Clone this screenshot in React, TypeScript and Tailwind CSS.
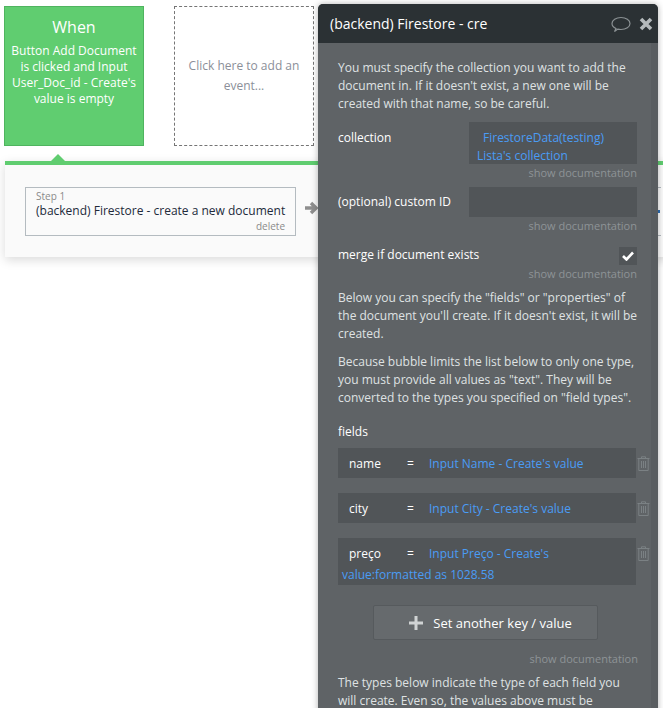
import React from "react";

const font = { fontFamily: '"Open Sans", sans-serif' };

function Doc({ className = "" }: { className?: string }) {
  return <div className={"text-right text-[11px] leading-[16px] text-[#8e9396] " + className}>show documentation</div>;
}

function Trash() {
  return (
    <svg width="13" height="15" viewBox="0 0 13 15" fill="none" stroke="#7b8184" strokeWidth="1" className="block">
      <path d="M0.5 2.5H12.5M4.5 2.5V0.8H8.5V2.5M1.8 2.5V14.5H11.2V2.5" />
      <path d="M4.5 5V12M6.5 5V12M8.5 5V12" />
    </svg>
  );
}

function Field({ name, first, second, h }: { name: string; first: string; second?: string; h: string }) {
  return (
    <div className="flex">
      <div className={"w-[298px] shrink-0 bg-[#515558] text-[12px] " + h}>
        <div className="flex h-[30px] items-center pt-[1px]">
          <span className="ml-[11px] w-[58px] text-white">{name}</span>
          <span className="w-[22px] text-white">=</span>
          <span className="text-[#4a9cf5]">{first}</span>
        </div>
        {second && <div className="ml-[4px] -mt-[3px] leading-[20px] text-[#4a9cf5]">{second}</div>}
      </div>
      <div className="ml-[1px] flex h-[30px] w-[13px] shrink-0 items-center justify-center"><Trash /></div>
    </div>
  );
}

export default function App() {
  return (
    <div className="relative h-[708px] w-[663px] overflow-hidden bg-white" style={font}>
      <div className="px-[4px] pt-[6px]">
        <div className="flex gap-[30px]">
          <div className="h-[140px] w-[140px] border border-[#4fb45f] bg-[#60cd70] pt-[8px] text-center text-white">
            <div className="text-[16px] leading-[24px]">When</div>
            <div className="mt-[4px] text-[12px] leading-[16px]">
              Button Add Document<br />is clicked and Input<br />User_Doc_id - Create's<br />value is empty
            </div>
          </div>
          <div className="flex h-[140px] w-[140px] justify-center border border-dashed border-[#757575] pt-[49px] text-center text-[12px] leading-[20px] text-[#8b8f99]">
            <div>Click here to add an<br />event...</div>
          </div>
        </div>
        <div className="relative ml-[1px] mt-[15px] h-[96px] w-[700px] border-t-[4px] border-[#60cd70] bg-[#fafafa] shadow-[0_3px_10px_rgba(0,0,0,0.15)]">
          <div className="absolute -top-[11px] left-[46px] h-0 w-0 border-x-[7px] border-b-[7px] border-x-transparent border-b-[#60cd70]" />
          <div className="ml-[20px] mt-[22px] flex items-center">
            <div className="h-[49px] w-[271px] shrink-0 border border-[#b4bbc0] pl-[10px] pr-[10px] pt-[1px]">
              <div className="text-[10px] leading-[15px] text-[#8a8a8a]">Step 1</div>
              <div className="whitespace-nowrap text-[12px] leading-[13px] text-[#222a3a]">(backend) Firestore - create a new document</div>
              <div className="mt-[2px] text-right text-[10px] leading-[15px] text-[#8a8a8a]">delete</div>
            </div>
            <svg width="14" height="14" viewBox="0 0 14 14" className="mb-[7px] ml-[8px] shrink-0" fill="none" stroke="#8e8e8e" strokeWidth="3.4">
              <path d="M1 7H12M7 2L12 7L7 12" />
            </svg>
            <div className="ml-[8px] flex h-[49px] w-[335px] shrink-0 items-center justify-end border-y border-[#b4bbc0] pr-[1px]">
              <div className="h-[3px] w-[2px] bg-[#2f6fb5]" />
            </div>
          </div>
        </div>
      </div>

      <div className="absolute left-[318px] top-[4px] h-[720px] w-[340px] overflow-hidden rounded-t-[5px] bg-[#5f6366] shadow-[0_0_6px_rgba(0,0,0,0.3)]">
        <div className="flex h-[39px] items-center bg-[#2b3134] pl-[12px] pr-[5px]">
          <div className="flex-1 text-[14px] text-white">(backend) Firestore - cre</div>
          <svg width="20" height="18" viewBox="0 0 20 18" fill="none" stroke="#8a9093" strokeWidth="1.2">
            <path d="M5 13.5C2.5 12.5 1 11 1 8.5C1 5 5 2.5 10 2.5S19 5 19 8.5S15 14.5 10 14.5C8.8 14.5 7.8 14.4 6.8 14.1L3.5 16.5Z" />
          </svg>
          <svg width="14" height="14" viewBox="0 0 14 14" className="ml-[8px]" fill="none" stroke="#b4b9bb" strokeWidth="3.6">
            <path d="M2 2L12 12M12 2L2 12" />
          </svg>
        </div>
        <div className="flex h-[681px]">
          <div className="w-[333px] pl-[20px] pr-[14px] pt-[16px] text-[12px] leading-[18px] text-[#dfe2e3]">
            <p>You must specify the collection you want to add the document in. If it doesn't exist, a new one will be created with that name, so be careful.</p>

            <div className="mt-[9px] flex">
              <div className="w-[131px] pt-[7px] text-white">collection</div>
              <div className="h-[42px] w-[168px] bg-[#515558] pt-[7px] text-[#4a9cf5]">
                <div className="pl-[14px]">FirestoreData(testing)</div>
                <div className="pl-[8px]">Lista's collection</div>
              </div>
            </div>
            <Doc className="mt-[1px]" />

            <div className="mt-[6px] flex">
              <div className="flex w-[131px] items-center whitespace-nowrap text-white">(optional) custom ID</div>
              <div className="h-[30px] w-[168px] bg-[#515558]" />
            </div>
            <Doc className="mt-[1px]" />

            <div className="mt-[13px] flex items-center justify-between">
              <div className="-mt-[3px] text-white">merge if document exists</div>
              <div className="flex h-[18px] w-[18px] items-center justify-center bg-[#515558]">
                <svg width="12" height="10" viewBox="0 0 12 10" fill="none" stroke="white" strokeWidth="2.6"><path d="M1 5L4.5 8.5L11 1.5" /></svg>
              </div>
            </div>
            <Doc className="mt-[1px]" />

            <p className="mt-[7px] whitespace-nowrap">Below you can specify the "fields" or "properties" of<br />the document you'll create. If it doesn't exist, it will be<br />created.</p>
            <p className="mt-[10px] whitespace-nowrap">Because bubble limits the list below to only one type,<br />you must provide all values as "text". They will be<br />converted to the types you specified on "field types".</p>

            <div className="mt-[16px] text-white">fields</div>
            <div className="mt-[7px] flex flex-col gap-[15px]">
              <Field name="name" first="Input Name - Create's value" h="h-[30px]" />
              <Field name="city" first="Input City - Create's value" h="h-[30px]" />
              <Field name="preço" first="Input Preço - Create's" second="value:formatted as 1028.58" h="h-[47px]" />
            </div>

            <div className="ml-[35px] mt-[20px] flex h-[35px] w-[225px] items-center justify-center rounded-[2px] border border-[#565a5d] bg-[#666a6d] pl-[10px] text-[13px] text-white">
              <svg width="14" height="14" viewBox="0 0 14 14" className="mr-[10px]" stroke="#d0d3d4" strokeWidth="3"><path d="M7 0V14M0 7H14" /></svg>
              Set another key / value
            </div>
            <Doc className="mr-[-1px] mt-[11px]" />
            <p className="mt-[7px]">The types below indicate the type of each field you will create. Even so, the values above must be</p>
          </div>
          <div className="w-[7px] bg-[#595d60]" />
        </div>
      </div>
    </div>
  );
}
